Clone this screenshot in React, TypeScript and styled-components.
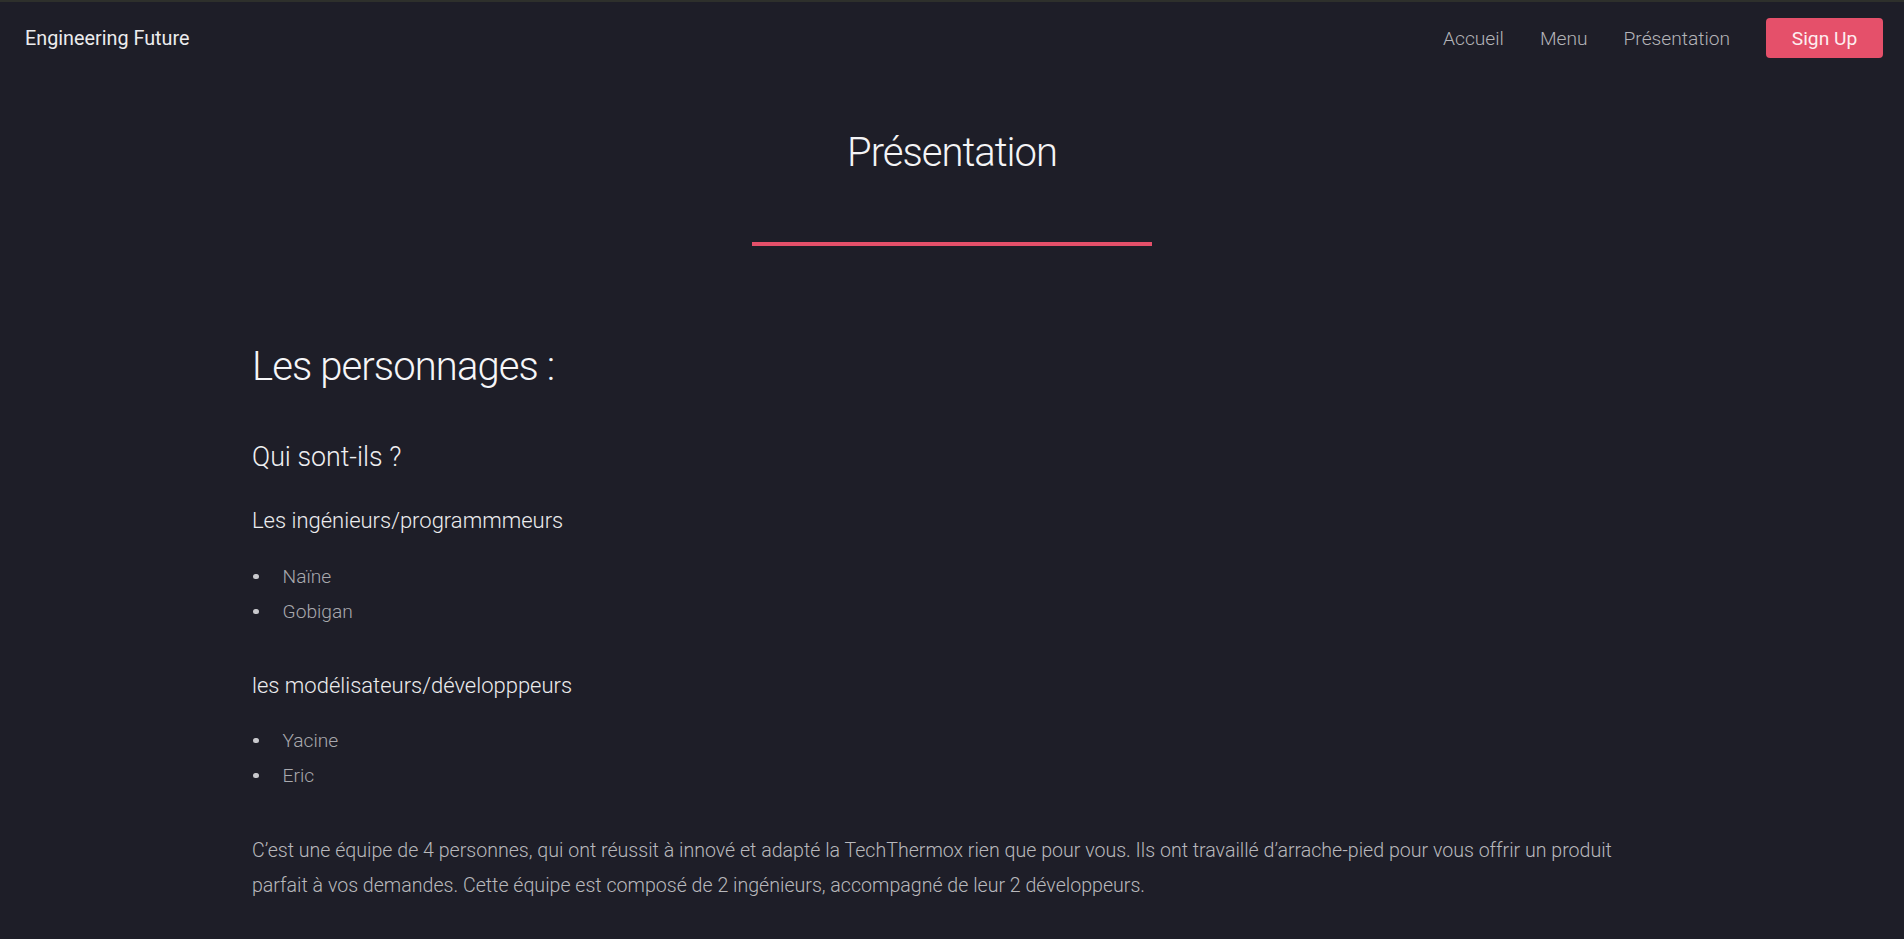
import React from "react";
import styled, { createGlobalStyle } from "styled-components";

const GlobalStyle = createGlobalStyle`
  html, body {
    margin: 0;
    padding: 0;
    background: #1e1e28;
  }
  body {
    font-family: Roboto, "Noto Sans", "Liberation Sans", sans-serif;
    font-weight: 300;
    color: #e8e8ea;
    border-top: 2px solid #2e302c;
  }
  * { box-sizing: border-box; }
`;

const Page = styled.div`
  min-height: 937px;
  background: #1e1e28;
`;

const NavBar = styled.header`
  height: 72px;
  display: flex;
  align-items: center;
  justify-content: space-between;
  padding: 0 21px 0 25px;
`;

const Brand = styled.a`
  font-size: 19.8px;
  font-weight: 400;
  color: #ececee;
  text-decoration: none;
`;

const NavLinks = styled.nav`
  display: flex;
  align-items: center;
  gap: 36px;
`;

const NavLink = styled.a`
  font-size: 19.2px;
  color: #b4b4b8;
  text-decoration: none;
`;

const SignUp = styled.button`
  height: 40px;
  width: 117px;
  border: none;
  border-radius: 4px;
  background: #e5506a;
  color: #fdeef0;
  font-family: inherit;
  font-size: 19.2px;
  font-weight: 400;
`;

const Hero = styled.section`
  display: flex;
  flex-direction: column;
  align-items: center;
  padding-top: 54px;
`;

const Title = styled.h1`
  margin: 0;
  font-size: 40px;
  line-height: 50px;
  letter-spacing: -1px;
  font-weight: 300;
  color: #f4f4f6;
`;

const Divider = styled.div`
  width: 400px;
  height: 4px;
  margin-top: 64px;
  background: #e5506a;
`;

const Content = styled.main`
  padding: 96px 252px 0 252px;
`;

const SectionTitle = styled.h2`
  margin: 0;
  font-size: 40px;
  line-height: 50px;
  letter-spacing: -0.9px;
  font-weight: 300;
  color: #f6f6f8;
`;

const SubTitle = styled.h3`
  margin: 49px 0 0;
  font-size: 26.8px;
  line-height: 33px;
  font-weight: 300;
  color: #efeff1;
`;

const GroupTitle = styled.h4<{ $gap: number }>`
  margin: ${(p) => p.$gap}px 0 0;
  font-size: 22px;
  line-height: 26px;
  font-weight: 300;
  color: #ececee;
`;

const List = styled.ul<{ $gap: number }>`
  margin: ${(p) => p.$gap}px 0 0;
  padding: 0 0 0 1px;
  list-style: none;
`;

const Item = styled.li`
  display: flex;
  align-items: center;
  gap: 24px;
  font-size: 19.2px;
  line-height: 35px;
  color: #a9a9ae;
  &::before {
    content: "";
    width: 5.5px;
    height: 5.5px;
    border-radius: 50%;
    background: #c8c8cc;
  }
`;

const Paragraph = styled.p`
  margin: 40px 0 0;
  font-size: 19.6px;
  line-height: 35.2px;
  color: #b8b8bc;
`;

export default function App() {
  return (
    <Page>
      <GlobalStyle />
      <NavBar>
        <Brand href="#">Engineering Future</Brand>
        <NavLinks>
          <NavLink href="#">Accueil</NavLink>
          <NavLink href="#">Menu</NavLink>
          <NavLink href="#">Présentation</NavLink>
          <SignUp>Sign Up</SignUp>
        </NavLinks>
      </NavBar>
      <Hero>
        <Title>Présentation</Title>
        <Divider />
      </Hero>
      <Content>
        <SectionTitle>Les personnages :</SectionTitle>
        <SubTitle>Qui sont-ils ?</SubTitle>
        <GroupTitle $gap={34}>Les ingénieurs/programmmeurs</GroupTitle>
        <List $gap={25}>
          <Item>Naïne</Item>
          <Item>Gobigan</Item>
        </List>
        <GroupTitle $gap={44}>les modélisateurs/développpeurs</GroupTitle>
        <List $gap={24}>
          <Item>Yacine</Item>
          <Item>Eric</Item>
        </List>
        <Paragraph>
          C’est une équipe de 4 personnes, qui ont réussit à innové et adapté la TechThermox rien que pour vous. Ils ont travaillé d’arrache-pied pour vous offrir un produit parfait à vos demandes. Cette équipe est composé de 2 ingénieurs, accompagné de leur 2 développeurs.
        </Paragraph>
      </Content>
    </Page>
  );
}
